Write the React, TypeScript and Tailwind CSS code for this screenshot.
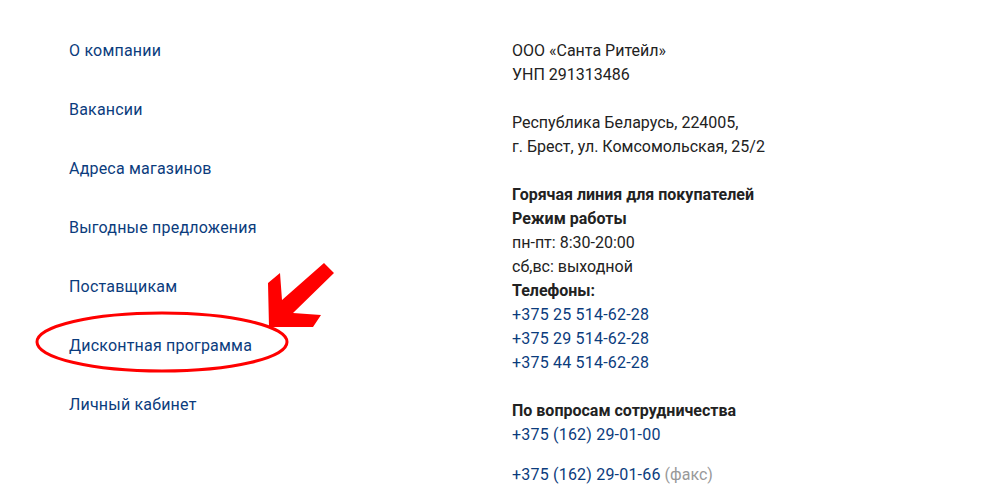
import React from 'react';

const links = [
  'О компании',
  'Вакансии',
  'Адреса магазинов',
  'Выгодные предложения',
  'Поставщикам',
  'Дисконтная программа',
  'Личный кабинет',
];

const phones = ['+375 25 514-62-28', '+375 29 514-62-28', '+375 44 514-62-28'];

export default function App() {
  return (
    <div
      className="relative h-[495px] w-[1000px] overflow-hidden bg-white text-[16px] leading-[24px] text-[#222]"
      style={{ fontFamily: 'Roboto, "Liberation Sans", sans-serif' }}
    >
      <div className="flex pt-[39px]">
        {/* Menu */}
        <nav className="ml-[69px] flex w-[443px] flex-col gap-[35px]">
          {links.map((l) => (
            <a key={l} href="#" className="tracking-[0.2px] text-[#0b3c7d]">
              {l}
            </a>
          ))}
        </nav>

        {/* Contacts */}
        <div className="flex flex-col">
          <p>ООО «Санта Ритейл»</p>
          <p>УНП 291313486</p>
          <p className="mt-[24px]">Республика Беларусь, 224005,</p>
          <p>г. Брест, ул. Комсомольская, 25/2</p>
          <p className="mt-[24px] font-bold">Горячая линия для покупателей</p>
          <p className="font-bold">Режим работы</p>
          <p>пн-пт: 8:30-20:00</p>
          <p>сб,вс: выходной</p>
          <p className="font-bold">Телефоны:</p>
          {phones.map((p) => (
            <a key={p} href="#" className="tracking-[0.2px] text-[#0b3c7d]">
              {p}
            </a>
          ))}
          <p className="mt-[24px] font-bold">По вопросам сотрудничества</p>
          <a href="#" className="tracking-[0.2px] text-[#0b3c7d]">
            +375 (162) 29-01-00
          </a>
          <p className="mt-[16px]">
            <a href="#" className="tracking-[0.2px] text-[#0b3c7d]">
              +375 (162) 29-01-66
            </a>{' '}
            <span className="text-[#999]">(факс)</span>
          </p>
        </div>
      </div>

      {/* Red annotation */}
      <svg className="pointer-events-none absolute left-0 top-0" width="1000" height="495">
        <ellipse cx="162" cy="342" rx="125" ry="29" fill="none" stroke="#f00" strokeWidth="3" />
        <polygon
          fill="#f00"
          points="269,327 268,283 280,273 282,300 324,263 334,273 293,313 321,315 313,327"
        />
      </svg>
    </div>
  );
}
